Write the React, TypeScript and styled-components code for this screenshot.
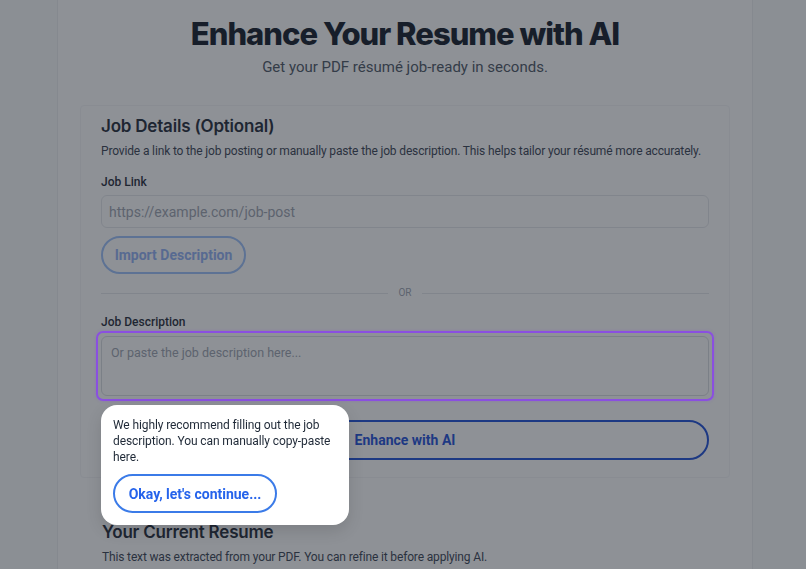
import styled, {createGlobalStyle} from "styled-components";

const GlobalStyle = createGlobalStyle`
  body {
    margin: 0;
    background: #f9fafb;
    font-family: Roboto, "Liberation Sans", sans-serif;
    color: #1f2937;
    overflow: hidden;
  }
  * { box-sizing: border-box; }
`;

const Page = styled.div`
  height: 569px;
  overflow: hidden;
`;

const Card = styled.main`
  width: 696px;
  margin: -1px 0 0 57px;
  background: #ffffff;
  border: 1px solid #eceef1;
  padding: 14px 22px 40px;
  min-height: 600px;
`;

const Title = styled.h1`
  margin: 0;
  text-align: center;
  font-family: Inter, sans-serif;
  font-size: 31px;
  line-height: 40px;
  font-weight: 800;
  letter-spacing: -1px;
  color: #111827;
`;

const Subtitle = styled.p`
  margin: 3px 0 0;
  text-align: center;
  font-size: 15px;
  line-height: 20px;
  color: #4b5563;
`;

const Section = styled.section`
  margin-top: 28px;
  border: 1px solid #f4f5f7;
  border-radius: 4px;
  padding: 8px 20px 17px;
`;

const SectionTitle = styled.h2`
  margin: 0;
  font-family: Inter, sans-serif;
  font-size: 17px;
  line-height: 24px;
  font-weight: 600;
  color: #1f2937;
  letter-spacing: -0.2px;
`;

const Hint = styled.p`
  margin: 4px 0 0;
  font-size: 12px;
  line-height: 18px;
  color: #374151;
  letter-spacing: -0.15px;
  white-space: nowrap;
`;

const Label = styled.label<{ $gap: number }>`
  display: block;
  margin-top: ${p => p.$gap}px;
  font-size: 12px;
  line-height: 16px;
  font-weight: 500;
  color: #1f2937;
`;

const TextInput = styled.input`
  display: block;
  width: 100%;
  height: 33px;
  margin-top: 5px;
  border: 1px solid #e5e7eb;
  border-radius: 6px;
  padding: 0 7px;
  font-family: inherit;
  font-size: 14px;
  background: #fff;
  &::placeholder { color: #9ca3af; }
`;

const PillButton = styled.button<{ $tone: "muted" | "primary" | "light"; $full?: boolean }>`
  display: block;
  width: ${p => p.$full ? "100%" : "auto"};
  height: 40px;
  padding: 0 16px;
  border-radius: 999px;
  border: 2px solid ${p => p.$tone === "primary" ? "#1d4ed8" : "#3b82f6"};
  background: transparent;
  font-family: inherit;
  font-size: 14px;
  font-weight: 700;
  color: ${p => p.$tone === "primary" ? "#1d4ed8" : "#2563eb"};
  opacity: ${p => p.$tone === "muted" ? 0.5 : 1};
`;

const ImportButton = styled(PillButton)`
  margin-top: 8px;
  height: 38px;
  width: 145px;
  padding: 0;
`;

const Divider = styled.div`
  display: flex;
  align-items: center;
  gap: 10px;
  margin-top: 12px;
  line-height: 14px;
  font-size: 10px;
  color: #9ca3af;
  &::before, &::after {
    content: "";
    flex: 1;
    height: 1px;
    background: #e5e7eb;
  }
`;

const AreaWrap = styled.div`
  position: relative;
  margin-top: 6px;
  &::after {
    content: "";
    position: absolute;
    inset: -5px;
    border: 2px solid #8a4fe0;
    border-radius: 7px;
    box-shadow: 0 0 3px rgba(138, 79, 224, 0.4);
    z-index: 11;
    pointer-events: none;
  }
`;

const TextArea = styled.textarea`
  display: block;
  width: 100%;
  height: 60px;
  border: 1px solid #d9dce1;
  border-radius: 6px;
  padding: 8px 9px;
  font-family: inherit;
  font-size: 12.5px;
  resize: none;
  background: #fff;
  &::placeholder { color: #9ca3af; }
`;

const ActionRow = styled.div`
  position: relative;
  margin-top: 24px;
`;

const Overlay = styled.div`
  position: fixed;
  inset: 0;
  background: rgba(30, 35, 45, 0.5);
  z-index: 10;
`;

const Popover = styled.div`
  position: absolute;
  left: 0;
  top: -15px;
  width: 248px;
  padding: 12px 12px 12px;
  background: #ffffff;
  border-radius: 16px;
  z-index: 12;
  box-shadow: 0 6px 16px rgba(0, 0, 0, 0.12);
`;

const PopoverText = styled.p`
  margin: 0;
  font-size: 12px;
  line-height: 16px;
  color: #1f2937;
  letter-spacing: -0.1px;
`;

const PopoverButton = styled(PillButton)`
  margin-top: 9px;
  height: 39px;
  width: 164px;
  padding: 0;
  color: #2563eb;
  border-color: #3b7be8;
`;

const ResumeSection = styled.section`
  padding: 0 22px;
  margin-top: 42px;
`;

export default function App() {
    return (
        <Page>
            <GlobalStyle/>
            <Card>
                <Title>Enhance Your Resume with AI</Title>
                <Subtitle>Get your PDF résumé job-ready in seconds.</Subtitle>

                <Section>
                    <SectionTitle>Job Details (Optional)</SectionTitle>
                    <Hint>Provide a link to the job posting or manually paste the job description. This helps tailor your résumé more accurately.</Hint>

                    <Label $gap={14}>Job Link</Label>
                    <TextInput placeholder="https://example.com/job-post"/>
                    <ImportButton $tone="muted">Import Description</ImportButton>

                    <Divider>OR</Divider>

                    <Label $gap={14}>Job Description</Label>
                    <AreaWrap>
                        <TextArea placeholder="Or paste the job description here..."/>
                    </AreaWrap>

                    <ActionRow>
                        <PillButton $tone="primary" $full>Enhance with AI</PillButton>
                        <Popover>
                            <PopoverText>We highly recommend filling out the job description. You can manually copy-paste here.</PopoverText>
                            <PopoverButton $tone="light">Okay, let's continue...</PopoverButton>
                        </Popover>
                    </ActionRow>
                </Section>

                <ResumeSection>
                    <SectionTitle>Your Current Resume</SectionTitle>
                    <Hint>This text was extracted from your PDF. You can refine it before applying AI.</Hint>
                </ResumeSection>
            </Card>
            <Overlay/>
        </Page>
    )
}
